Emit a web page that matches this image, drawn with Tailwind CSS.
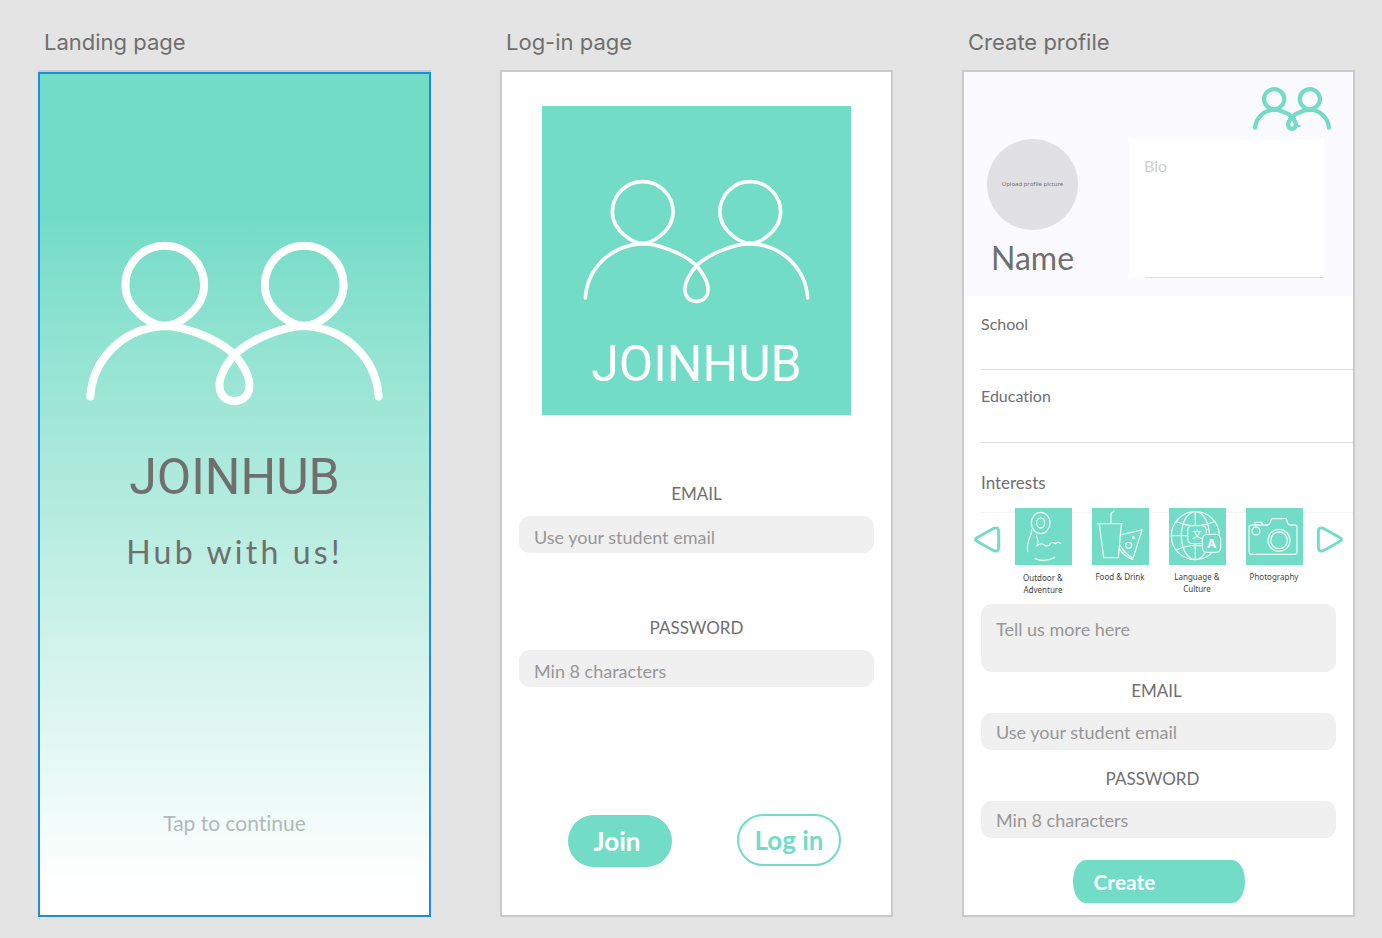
<!DOCTYPE html>
<html lang="en">
<head>
<meta charset="utf-8">
<meta name="viewport" content="width=device-width, initial-scale=1">
<title>JoinHub screens</title>
<script src="https://cdn.jsdelivr.net/npm/@tailwindcss/browser@4"></script>
</head>
<body class="min-h-screen bg-[#e4e4e4] font-['Lato','Noto_Sans',sans-serif] text-[#6f6f6f] [font-variant-ligatures:none]">
<svg class="hidden" aria-hidden="true">
  <defs>
    <g id="people" fill="none" stroke-linejoin="round">
      <path d="M63 514C70 410 150 312 284 303C320 303 420 322 495 388C520 418 540 450 540 480C540 510 520 528 495 528C470 528 450 510 450 480C450 450 470 418 495 388C570 322 670 303 706 303C840 312 920 410 927 514" stroke-linecap="round"/>
      <path d="M286 302C262 302 240 290 222 276C188 250 168 222 168 180A118 118 0 0 1 404 180C404 222 384 250 350 276C332 290 310 302 286 302Z"/>
      <path d="M704 302C680 302 658 290 640 276C606 250 586 222 586 180A118 118 0 0 1 822 180C822 222 802 250 768 276C750 290 728 302 704 302Z"/>
    </g>
  </defs>
</svg>

<main class="grid grid-cols-3 gap-[69px] pt-[26px] pr-[27px] pb-[21px] pl-[38px]">

  <section class="flex flex-col">
    <h2 class="mb-[12px] pl-[6px] font-['Inter',sans-serif] text-[22px] leading-[32px]">Landing page</h2>
    <div class="flex grow flex-col border-t-2 border-[#cacaca]">
      <div class="flex grow flex-col items-center border-2 border-[#1a8ddb] bg-linear-to-b from-[#72dcc7] from-17% to-white to-97% pt-[167px] pb-[78px]">
        <svg class="w-[297px] overflow-visible stroke-white" viewBox="50 48 890 494" stroke-width="24" role="img" aria-label="JoinHub logo"><use href="#people"/></svg>
        <h1 class="mt-[43px] font-['Roboto',sans-serif] text-[50px] leading-[56px]">JOINHUB</h1>
        <p class="mt-[31px] text-[32px] leading-[32px] tracking-widest">Hub with us!</p>
        <button type="button" class="mt-auto text-[21px] leading-[28px] text-[#b0bab8]">Tap to continue</button>
      </div>
    </div>
  </section>

  <section class="flex flex-col">
    <h2 class="mb-[12px] pl-[6px] font-['Inter',sans-serif] text-[22px] leading-[32px]">Log-in page</h2>
    <form class="flex grow flex-col border-2 border-[#cacaca] bg-white px-[17px] pt-[34px]">
      <div class="mx-[23px] flex aspect-square flex-col items-center bg-[#72dcc7] pt-[72px] text-white">
        <svg class="w-[229px] overflow-visible stroke-white" viewBox="50 48 890 494" stroke-width="14" role="img" aria-label="JoinHub logo"><use href="#people"/></svg>
        <p class="mt-[31px] font-['Roboto',sans-serif] text-[50px] leading-[56px]">JOINHUB</p>
      </div>
      <label for="login-email" class="mt-[67px] text-center text-[17px] leading-[24px]">EMAIL</label>
      <input id="login-email" type="email" placeholder="Use your student email" class="mt-[10px] h-[37px] rounded-[11px] bg-[#f0f0f0] px-[15px] pt-[5px] text-[18px] placeholder:text-[#979797]">
      <label for="login-password" class="mt-[63px] text-center text-[17px] leading-[24px]">PASSWORD</label>
      <input id="login-password" type="password" placeholder="Min 8 characters" class="mt-[10px] h-[37px] rounded-[11px] bg-[#f0f0f0] px-[15px] pt-[5px] text-[18px] placeholder:text-[#979797]">
      <div class="mt-[127px] flex justify-between pr-[33px] pl-[49px]">
        <button type="button" class="mt-px h-[52px] w-[104px] rounded-full bg-[#72dcc7] pr-[6px] text-[26px] font-bold text-white">Join</button>
        <button type="button" class="h-[52px] w-[104px] rounded-full border-2 border-[#72dcc7] text-[26px] font-bold text-[#72dcc7]">Log in</button>
      </div>
    </form>
  </section>

  <section class="flex flex-col">
    <h2 class="mb-[12px] pl-[6px] font-['Inter',sans-serif] text-[22px] leading-[32px]">Create profile</h2>
    <form class="flex grow flex-col border-2 border-[#cacaca] bg-white pb-[12px]">
      <header class="h-[224px] bg-[#fbfaff] pt-[15px] pr-[29px] pl-[23px]">
        <svg class="-mr-[6px] ml-auto h-[44px] w-[76px] overflow-visible stroke-[#72dcc7]" viewBox="50 48 890 494" stroke-width="50" role="img" aria-label="JoinHub logo"><use href="#people"/><path d="M550 470L610 490L560 512Z" fill="#72dcc7" stroke="none"/></svg>
        <div class="mt-[8px] flex justify-between">
          <div class="flex flex-col items-center">
            <button type="button" class="size-[91px] rounded-full bg-[#e1e0e4] font-['Noto_Sans',sans-serif] text-[6px]">Upload profile picture</button>
            <h3 class="mt-[8px] text-[32px] leading-[40px]">Name</h3>
          </div>
          <div class="w-[195px]">
            <textarea aria-label="Bio" placeholder="Bio" class="block h-[138px] w-full resize-none bg-white px-[15px] pt-[15px] text-[16px] leading-[24px] placeholder:text-[#cfcfcf]"></textarea>
            <div class="ml-[16px] border-t border-[#dddddf]"></div>
          </div>
        </div>
      </header>
      <div class="flex flex-col pl-[17px] text-[16px] leading-[24px]">
        <label for="school" class="mt-[16px]">School</label>
        <input id="school" type="text" class="h-[34px] border-b border-[#dedede]">
        <label for="education" class="mt-[14px]">Education</label>
        <input id="education" type="text" class="h-[35px] border-b border-[#dedede]">
        <h3 class="mt-[28px] text-[17px]">Interests</h3>
      </div>
      <div class="relative mt-[13px] flex justify-between px-[10px]">
        <div class="absolute top-[4px] right-0 left-[17px] border-t border-[#f5f5f5]"></div>
        <button type="button" aria-label="Previous" class="mt-[18px] self-start">
          <svg class="h-[27px] w-[26px] overflow-visible" viewBox="0 0 79 82" fill="none" stroke="#72dcc7" stroke-width="9"><path d="M10 35L60 7Q74 2 75 16V66Q74 80 60 75L10 47Q-1 41 10 35Z"/></svg>
        </button>
        <ul class="relative flex w-[288px] justify-between text-center font-['Noto_Sans',sans-serif] text-[8px] leading-[12px] text-[#444]">
          <li class="w-[57px]">
            <svg class="mb-[7px] size-[57px] bg-[#72dcc7]" viewBox="0 0 171 171" fill="none" stroke="#e6faf6" stroke-width="4" stroke-linecap="round">
              <ellipse cx="77" cy="45" rx="28" ry="32"/><ellipse cx="77" cy="45" rx="12" ry="15"/>
              <path d="M50 66C50 88 32 98 38 131M65 84Q71 98 67 112Q80 103 90 112Q97 116 102 112Q110 98 121 107Q130 100 136 106M60 152Q90 165 119 148"/>
            </svg>Outdoor &amp; Adventure</li>
          <li class="w-[57px]">
            <svg class="mb-[6px] size-[57px] bg-[#72dcc7]" viewBox="0 0 171 171" fill="none" stroke="#e6faf6" stroke-width="4" stroke-linecap="round" stroke-linejoin="round">
              <path d="M66 10L57 16V46M16 47H90M22 48L35 149H79L88 48M88 80L150 66L122 154Q98 146 82 123M84 112Q98 136 121 149"/>
              <circle cx="110" cy="112" r="9"/><circle cx="124" cy="89" r="3" fill="#e6faf6"/>
            </svg>Food &amp; Drink</li>
          <li class="w-[57px]">
            <svg class="mb-[6px] size-[57px] bg-[#72dcc7]" viewBox="0 0 171 171" fill="none" stroke="#e6faf6" stroke-width="4" stroke-linejoin="round">
              <circle cx="79" cy="83" r="72"/><ellipse cx="79" cy="83" rx="42" ry="72"/>
              <path d="M79 11V155M22 41Q79 66 136 41M7 83H151M22 126Q79 98 136 126"/>
              <rect x="56" y="53" width="56" height="54" rx="14" fill="#72dcc7"/>
              <rect x="97" y="76" width="61" height="60" rx="16" fill="#72dcc7" stroke="none"/>
              <rect x="100" y="79" width="55" height="54" rx="14" fill="#72dcc7"/>
              <text x="84" y="90" text-anchor="middle" class="font-['Noto_Sans_CJK_SC',sans-serif] text-[30px]" fill="#fff" stroke="none">文</text>
              <text x="128" y="119" text-anchor="middle" class="text-[38px] font-bold" fill="#fff" stroke="none">A</text>
            </svg>Language &amp; Culture</li>
          <li class="w-[57px]">
            <svg class="mb-[6px] size-[57px] bg-[#72dcc7]" viewBox="0 0 171 171" fill="none" stroke="#e6faf6" stroke-width="4" stroke-linejoin="round">
              <path d="M9 59Q9 51 17 51H64Q71 50 73 43L77 32H121L125 45Q127 51 133 51H145Q153 51 153 59V131Q153 139 145 139H17Q9 139 9 131ZM27 51V43H48V51"/>
              <circle cx="30" cy="69" r="12"/><circle cx="99" cy="97" r="33"/><circle cx="99" cy="97" r="25"/>
            </svg>Photography</li>
        </ul>
        <button type="button" aria-label="Next" class="mt-[18px] self-start">
          <svg class="h-[27px] w-[26px] overflow-visible" viewBox="0 0 79 82" fill="none" stroke="#72dcc7" stroke-width="9"><path d="M69 35L19 7Q5 2 4 16V66Q5 80 19 75L69 47Q80 41 69 35Z"/></svg>
        </button>
      </div>
      <div class="flex flex-col px-[17px] text-[18px] leading-[24px]">
        <textarea aria-label="Tell us more" placeholder="Tell us more here" class="mt-[8px] h-[68px] resize-none rounded-[11px] bg-[#f0f0f0] px-[15px] pt-[13px] placeholder:text-[#979797]"></textarea>
        <label for="new-email" class="mt-[7px] pr-[4px] text-center text-[17px]">EMAIL</label>
        <input id="new-email" type="email" placeholder="Use your student email" class="mt-[10px] h-[37px] rounded-[11px] bg-[#f0f0f0] px-[15px] placeholder:text-[#979797]">
        <label for="new-password" class="mt-[17px] pr-[12px] text-center text-[17px]">PASSWORD</label>
        <input id="new-password" type="password" placeholder="Min 8 characters" class="mt-[10px] h-[37px] rounded-[11px] bg-[#f0f0f0] px-[15px] placeholder:text-[#979797]">
        <button type="button" class="mt-[22px] h-[43px] w-[172px] self-center rounded-[13px/22px] bg-[#72dcc7] pl-[21px] text-left text-[21px] font-bold text-white">Create</button>
      </div>
    </form>
  </section>
</main>
</body>
</html>
